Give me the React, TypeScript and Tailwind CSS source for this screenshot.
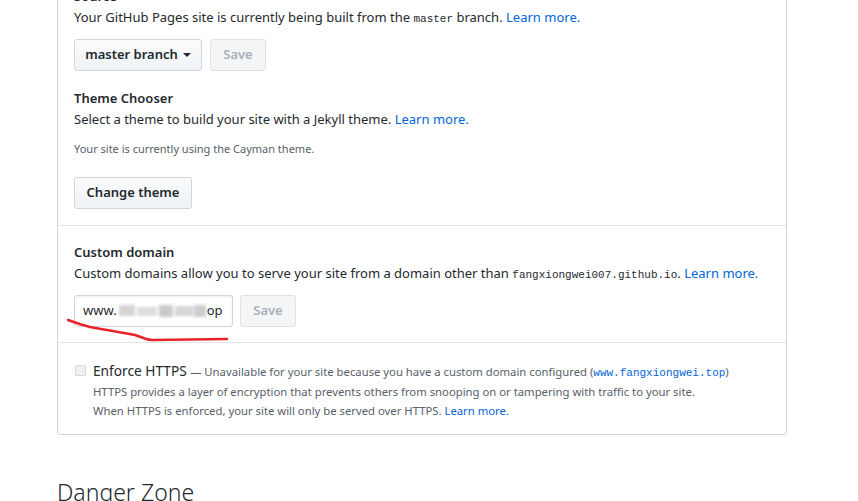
import React from "react";

const btn =
  "h-[32px] rounded-[3px] border border-[#d1d5da] bg-gradient-to-b from-[#fafbfc] to-[#eff3f6] text-[13px] font-semibold text-[#24292e] flex items-center justify-center";
const btnDisabled =
  "h-[32px] rounded-[3px] border border-[#dfe2e5] bg-[#f3f5f7] text-[13px] font-semibold text-[#a9b0b7] flex items-center justify-center";

const Code: React.FC<{ children: React.ReactNode }> = ({ children }) => (
  <code className="font-['Liberation_Mono',monospace] text-[11px] leading-none">{children}</code>
);

const Link: React.FC<{ children: React.ReactNode }> = ({ children }) => (
  <a className="text-[#0366d6]">{children}</a>
);

export default function App() {
  return (
    <div className="relative h-[501px] overflow-hidden bg-white font-['Noto_Sans',sans-serif] text-[13px] text-[#24292e]">
      <div className="ml-[57px] w-[730px] -mt-[31px]">
        <div className="rounded-[3px] border border-[#d1d5da]">
          {/* Source + theme chooser */}
          <div className="px-4 pt-4 pb-4 border-b border-[#e1e4e8]">
            <h3 className="font-semibold leading-[21px]">Source</h3>
            <p className="leading-[21px]">
              Your GitHub Pages site is currently being built from the <Code>master</Code> branch.{" "}
              <Link>Learn more.</Link>
            </p>
            <div className="mt-[10.5px] flex gap-2">
              <div className={`${btn} w-[128px]`}>
                master branch
                <span className="ml-[5px] inline-block h-0 w-0 border-x-[4px] border-t-[4px] border-x-transparent border-t-[#24292e]" />
              </div>
              <div className={`${btnDisabled} w-[56px]`}>Save</div>
            </div>

            <h3 className="mt-[17.5px] font-semibold leading-[21px]">Theme Chooser</h3>
            <p className="leading-[21px]">
              Select a theme to build your site with a Jekyll theme. <Link>Learn more.</Link>
            </p>
            <p className="mt-[10px] text-[11px] leading-[18px] text-[#586069]">
              Your site is currently using the Cayman theme.
            </p>
            <div className={`${btn} mt-[19px] w-[118px]`}>Change theme</div>
          </div>

          {/* Custom domain */}
          <div className="px-4 pt-4 pb-[15px] border-b border-[#e1e4e8]">
            <h3 className="font-semibold leading-[21px]">Custom domain</h3>
            <p className="leading-[21px]">
              Custom domains allow you to serve your site from a domain other than{" "}
              <Code>fangxiongwei007.github.io</Code>. <Link>Learn more.</Link>
            </p>
            <div className="mt-[11px] flex gap-[7px]">
              <div className="h-[32px] w-[159px] rounded-[3px] border border-[#d1d5da] bg-white px-2 flex items-center shadow-[inset_0_1px_2px_rgba(27,31,35,0.075)]">
                <span>www.</span>
                <span className="relative inline-block h-[14px] w-[90px] blur-[1.5px]">
                  <span className="absolute left-[2px] top-[1px] h-[11px] w-[16px] bg-[#d3d3d3]" />
                  <span className="absolute left-[20px] top-[3px] h-[9px] w-[20px] bg-[#dddddd]" />
                  <span className="absolute left-[42px] top-[1px] h-[12px] w-[14px] bg-[#cacaca]" />
                  <span className="absolute left-[58px] top-[2px] h-[10px] w-[18px] bg-[#d6d6d6]" />
                  <span className="absolute left-[77px] top-[1px] h-[12px] w-[12px] bg-[#cdcdcd]" />
                </span>
                <span>op</span>
              </div>
              <div className={`${btnDisabled} w-[56px]`}>Save</div>
            </div>
          </div>

          {/* Enforce HTTPS */}
          <div className="px-4 pt-[17px] pb-[14px]">
            <div className="flex">
              <div className="w-[19px] shrink-0 pt-[5px] pl-[1px]">
                <div className="h-[11px] w-[11px] rounded-[2px] border border-[#d6d6d6] bg-[#f0f0f0]" />
              </div>
              <div>
                <p className="leading-[21px]">
                  <span className="text-[13.7px]">Enforce HTTPS</span>{" "}
                  <span className="text-[11.3px] text-[#586069]">
                    — Unavailable for your site because you have a custom domain configured (
                    <span className="text-[#0366d6]">
                      <Code>www.fangxiongwei.top</Code>
                    </span>
                    )
                  </span>
                </p>
                <p className="text-[11.3px] leading-[19px] text-[#586069]">
                  HTTPS provides a layer of encryption that prevents others from snooping on or tampering with traffic to your site.
                </p>
                <p className="text-[11.3px] leading-[19px] text-[#586069]">
                  When HTTPS is enforced, your site will only be served over HTTPS. <Link>Learn more.</Link>
                </p>
              </div>
            </div>
          </div>
        </div>

        <h2 className="mt-[42px] text-[23px] font-light leading-[30px]">Danger Zone</h2>
      </div>

      {/* red hand-drawn underline annotation */}
      <svg className="pointer-events-none absolute left-0 top-0" width="858" height="501">
        <path
          d="M68 320 C76 323 82 325 90 327 C105 330 120 332 135 335 C142 337 146 340 153 340 L227 339"
          fill="none"
          stroke="#e8232a"
          strokeWidth="2.5"
          strokeLinecap="round"
        />
      </svg>
    </div>
  );
}
